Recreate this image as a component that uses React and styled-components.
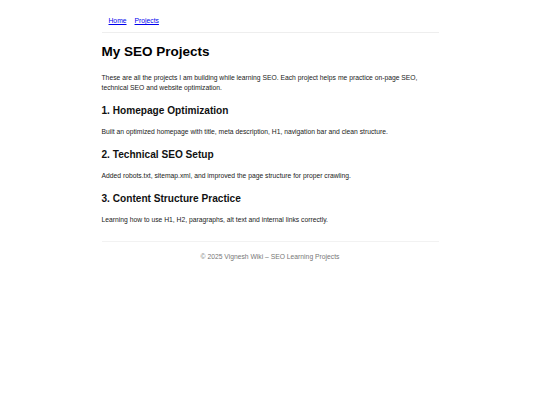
import React from "react";
import styled, { createGlobalStyle } from "styled-components";

const Global = createGlobalStyle`
  html, body { margin: 0; padding: 0; background: #fff; }
  body { font-family: "Liberation Sans", Arial, sans-serif; color: #222; }
`;

const Page = styled.div`
  max-width: 337px;
  margin: 0 auto;
`;

const Header = styled.header`
  padding: 16px 7px 7px;
  border-bottom: 1px solid #eee;
`;

const Nav = styled.nav`
  display: flex;
  gap: 8px;
  font-size: 6.75px;
  line-height: 9px;
`;

const Link = styled.a`
  color: #0000ee;
  text-decoration: underline;
`;

const Main = styled.main`
  padding: 11px 0 16px;
  border-bottom: 1px solid #f2f2f2;
`;

const Title = styled.h1`
  margin: 0 0 13px;
  font-size: 13.5px;
  line-height: 16px;
  font-weight: bold;
  color: #000;
`;

const Section = styled.section`
  margin-top: ${(p) => p.$gap}px;
`;

const Heading = styled.h2`
  margin: 0 0 10px;
  font-size: 10.125px;
  line-height: 12px;
  font-weight: bold;
  color: #111;
`;

const Text = styled.p`
  margin: 0;
  font-size: 6.75px;
  line-height: 10px;
  color: #222;
`;

const Footer = styled.footer`
  padding: 10px 0;
  text-align: center;
  font-size: 6.75px;
  line-height: 10px;
  color: #777;
`;

const projects = [
  {
    title: "1. Homepage Optimization",
    text: "Built an optimized homepage with title, meta description, H1, navigation bar and clean structure.",
  },
  {
    title: "2. Technical SEO Setup",
    text: "Added robots.txt, sitemap.xml, and improved the page structure for proper crawling.",
  },
  {
    title: "3. Content Structure Practice",
    text: "Learning how to use H1, H2, paragraphs, alt text and internal links correctly.",
  },
];

export default function App() {
  return (
    <>
      <Global />
      <Page>
        <Header>
          <Nav>
            <Link href="#">Home</Link>
            <Link href="#">Projects</Link>
          </Nav>
        </Header>
        <Main>
          <Title>My SEO Projects</Title>
          <Text>
            These are all the projects I am building while learning SEO. Each project helps me practice on-page SEO,
            technical SEO and website optimization.
          </Text>
          {projects.map((p) => (
            <Section key={p.title} $gap={12}>
              <Heading>{p.title}</Heading>
              <Text>{p.text}</Text>
            </Section>
          ))}
        </Main>
        <Footer>© 2025 Vignesh Wiki – SEO Learning Projects</Footer>
      </Page>
    </>
  );
}
